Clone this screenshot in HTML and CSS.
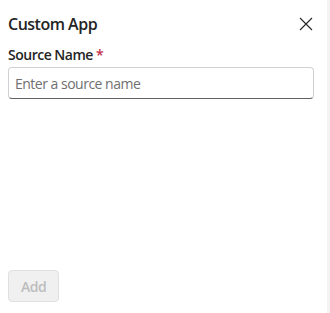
FILE: index.html
```html
<!DOCTYPE html>
<html>
<head>
<meta charset="utf-8">
<link rel="stylesheet" href="styles.css">
</head>
<body>
<div class="page">
  <div class="panel">
    <div class="header">
      <h1 class="title">Custom App</h1>
      <button class="close" aria-label="Close">
        <svg width="14" height="14" viewBox="0 0 14 14"><path d="M1 1 L13 13 M13 1 L1 13" stroke="#242424" stroke-width="1.1" fill="none"/></svg>
      </button>
    </div>
    <div class="field">
      <label class="label">Source Name <span class="req">*</span></label>
      <input class="input" type="text" placeholder="Enter a source name">
    </div>
    <div class="spacer"></div>
    <div class="footer">
      <button class="btn" disabled>Add</button>
    </div>
  </div>
  <div class="edge"></div>
</div>
</body>
</html>
```
FILE: styles.css
```css
html, body {
  margin: 0;
  padding: 0;
  background: #ffffff;
}
.page {
  display: flex;
  width: 330px;
  height: 313px;
}
.panel {
  flex: 1;
  display: flex;
  flex-direction: column;
  padding: 0 13px 0 8px;
  font-family: "Open Sans", "Noto Sans", sans-serif;
  letter-spacing: -0.5px;
  color: #242424;
}
.edge {
  width: 3px;
  background: #f3f3f3;
}
.header {
  display: flex;
  align-items: center;
  justify-content: space-between;
  height: 22px;
  margin-top: 13px;
}
.title {
  margin: 0;
  font-size: 16px;
  font-weight: 600;
  line-height: 22px;
}
.close {
  border: 0;
  background: none;
  padding: 0;
  width: 14px;
  height: 14px;
  margin-right: 1px;
  display: flex;
}
.field {
  display: flex;
  flex-direction: column;
  margin-top: 10px;
}
.label {
  font-size: 14px;
  font-weight: 600;
  line-height: 20px;
  margin-bottom: 2px;
}
.req {
  color: #c4314b;
}
.input {
  box-sizing: border-box;
  height: 32px;
  border: 1px solid #d1d1d1;
  border-bottom-color: #616161;
  border-radius: 4px;
  padding: 0 6px;
  font-family: inherit;
  font-size: 14px;
  letter-spacing: -0.5px;
  color: #242424;
  outline: none;
}
.input::placeholder {
  color: #707070;
}
.spacer {
  flex: 1;
}
.footer {
  margin-bottom: 11px;
}
.btn {
  box-sizing: border-box;
  width: 51px;
  height: 32px;
  background: #f0f0f0;
  border: 1px solid #e0e0e0;
  border-radius: 4px;
  color: #bdbdbd;
  font-family: inherit;
  font-size: 14px;
  font-weight: 600;
  letter-spacing: -0.5px;
  padding: 0;
}
```
